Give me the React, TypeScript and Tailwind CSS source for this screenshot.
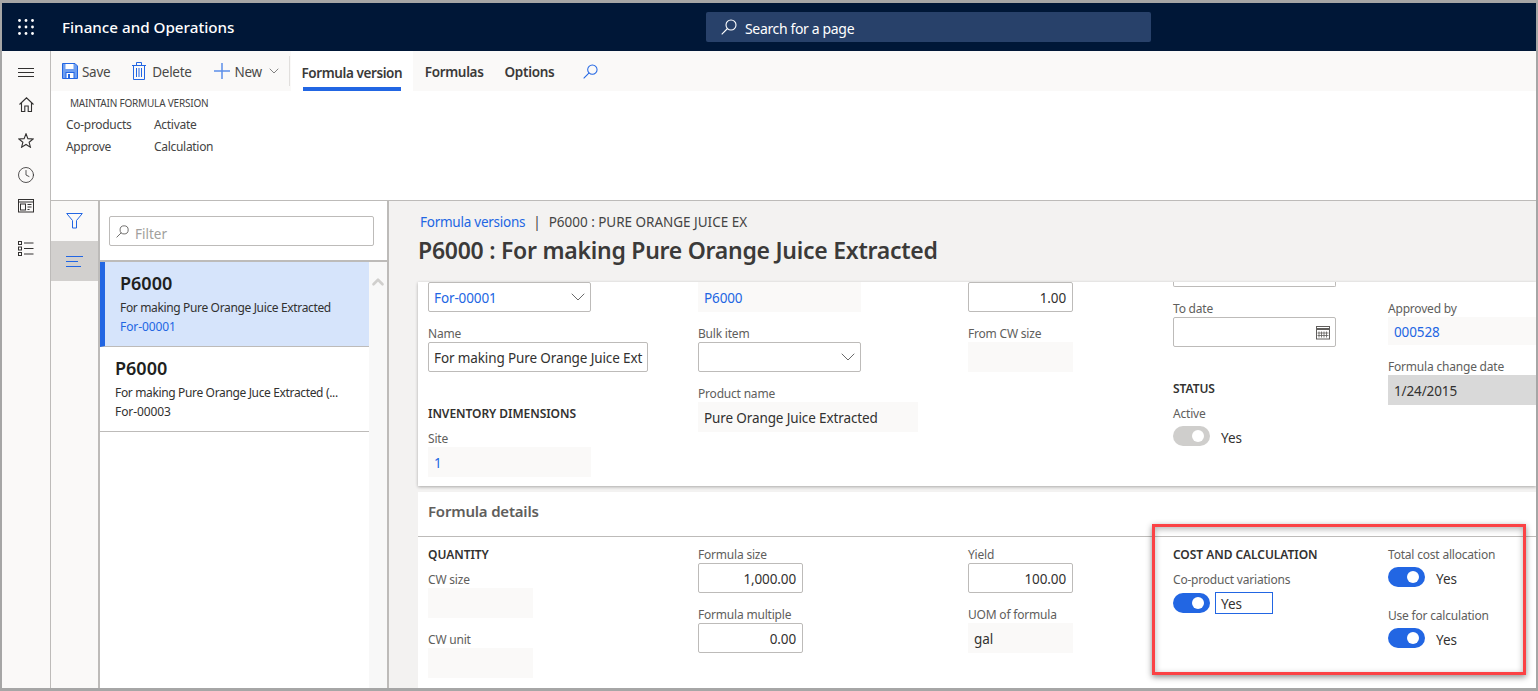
import React from 'react';
import { ChevronDown, ChevronUp, Clock } from 'lucide-react';

const font = { fontFamily: '"Noto Sans", sans-serif' };

function Label({ children }: { children: React.ReactNode }) {
  return <div className="h-[18px] pt-[1px] text-[12px] leading-[18px] text-[#605e5c] tracking-[-0.2px] whitespace-nowrap">{children}</div>;
}

function Heading({ children }: { children: React.ReactNode }) {
  return <div className="h-[19px] text-[12px] leading-[19px] font-semibold text-[#323130] tracking-[-0.05px] whitespace-nowrap">{children}</div>;
}

function Input({ width, right, link, chevron, children }: { width: string; right?: boolean; link?: boolean; chevron?: boolean; children?: React.ReactNode }) {
  return (
    <div className={`${width} h-[30px] border border-[#bdbbb9] rounded-[2px] bg-white flex items-center pl-[5px] text-[13.5px] tracking-[-0.12px] whitespace-nowrap overflow-hidden ${right ? 'justify-end pr-[6px]' : 'justify-between pr-[5px]'} ${link ? 'text-[#2266e3]' : 'text-[#323130]'}`}>
      <span className="pt-[2px]">{children}</span>
      {chevron && <ChevronDown size={24} strokeWidth={0.8} className="text-[#444] -mr-[5px]" />}
    </div>
  );
}

function ReadOnly({ width, link, children, tall }: { width: string; link?: boolean; tall?: string; children?: React.ReactNode }) {
  return (
    <div className={`${width} ${tall ?? 'h-[30px]'} bg-[#faf9f8] flex items-center pl-[6px] pt-[2px] text-[13.5px] tracking-[-0.12px] whitespace-nowrap ${link ? 'text-[#2266e3]' : 'text-[#323130]'}`}>
      {children}
    </div>
  );
}

function Toggle({ grey }: { grey?: boolean }) {
  return (
    <div className={`w-[37px] h-[20px] rounded-full flex items-center justify-end pr-[6px] shrink-0 ${grey ? 'bg-[#cfcecc]' : 'bg-[#2266e3]'}`}>
      <div className="w-[12px] h-[12px] rounded-full bg-white" />
    </div>
  );
}

function ToggleRow({ grey }: { grey?: boolean }) {
  return (
    <div className="h-[20px] flex items-center gap-[11px] text-[13.5px] text-[#323130]">
      <Toggle grey={grey} />
      <span className="pt-[4px]">Yes</span>
    </div>
  );
}

function SearchIcon({ size, color }: { size: number; color: string }) {
  return (
    <svg width={size} height={size} viewBox="0 0 16 16" fill="none" stroke={color} strokeWidth="1.1" className="shrink-0">
      <circle cx="10" cy="6" r="5" />
      <path d="M6.5 9.5L0.7 15.3" />
    </svg>
  );
}

function GridIcon() {
  return (
    <svg width="16" height="16" viewBox="0 0 16 16" fill="#fff">
      {[1.5, 8, 14.5].map((y) => [1.5, 8, 14.5].map((x) => <circle key={`${x}-${y}`} cx={x} cy={y} r="1.4" />))}
    </svg>
  );
}

function SaveIcon() {
  return (
    <svg width="16" height="16" viewBox="0 0 16 16" className="shrink-0">
      <path d="M0.5 0.5H13L15.5 3V15.5H0.5Z" fill="#6f9ff0" stroke="#2266e3" />
      <rect x="3.5" y="1" width="8" height="5" fill="#fff" />
      <rect x="4" y="9.5" width="8" height="6" fill="#fff" stroke="#2266e3" />
      <rect x="6" y="11" width="2" height="4" fill="#2266e3" />
    </svg>
  );
}

function TrashIcon() {
  return (
    <svg width="14" height="18" viewBox="0 0 14 18" fill="none" stroke="#2266e3" className="shrink-0 mr-[2px]">
      <path d="M0 3.5H14M4.5 3.5V0.5H9.5V3.5M1.5 3.5V17.5H12.5V3.5M4.5 6V15M7 6V15M9.5 6V15" />
    </svg>
  );
}

function PlusIcon() {
  return (
    <svg width="16" height="16" viewBox="0 0 16 16" fill="none" stroke="#5c8fe9" strokeWidth="1.5" className="shrink-0 mr-[1px]">
      <path d="M8 0V16M0 8H16" />
    </svg>
  );
}

function MenuIcon() {
  return (
    <svg width="16" height="9" viewBox="0 0 16 9" fill="none" stroke="#323130">
      <path d="M0 0.5H16M0 4.5H16M0 8.5H16" />
    </svg>
  );
}

function HomeIcon() {
  return (
    <svg width="15" height="15" viewBox="0 0 15 15" fill="none" stroke="#323130" strokeWidth="1.1">
      <path d="M0.5 7.5L7.5 0.8L14.5 7.5M2.5 5.8V14.5H5.8V9H9.2V14.5H12.5V5.8" />
    </svg>
  );
}

function StarIcon() {
  return (
    <svg width="16" height="15" viewBox="0 0 16 15" fill="none" stroke="#323130" strokeWidth="1.1">
      <path d="M8 0.8L9.9 5.6L15.2 5.9L11.1 9.2L12.4 14.2L8 11.5L3.6 14.2L4.9 9.2L0.8 5.9L6.1 5.6Z" />
    </svg>
  );
}

function NewsIcon() {
  return (
    <svg width="16" height="14" viewBox="0 0 16 14" fill="none" stroke="#323130">
      <rect x="0.5" y="0.5" width="15" height="12.5" />
      <path d="M0.5 3H15.5" />
      <rect x="2.5" y="5" width="5" height="6" />
      <path d="M9.5 5.5H13.5M9.5 8H13.5M9.5 10.5H11.5" />
    </svg>
  );
}

function ListIcon() {
  return (
    <svg width="16" height="15" viewBox="0 0 16 15" fill="none" stroke="#323130">
      <rect x="0.5" y="0.5" width="3" height="3" />
      <rect x="0.5" y="6" width="3" height="3" />
      <rect x="0.5" y="11.5" width="3" height="3" />
      <path d="M6 2H15.5M6 7.5H15.5M6 13H15.5" />
    </svg>
  );
}

function FunnelIcon() {
  return (
    <svg width="17" height="16" viewBox="0 0 17 16" fill="none" stroke="#2266e3">
      <path d="M0.7 0.5H16.3L10.5 7.5V15H6.5V7.5Z" />
    </svg>
  );
}

function LinesIcon() {
  return (
    <svg width="17" height="11" viewBox="0 0 17 11" fill="none" stroke="#2266e3">
      <path d="M0 0.5H17M0 5.5H12M0 10.5H15" />
    </svg>
  );
}

function CalendarIcon() {
  return (
    <svg width="15" height="15" viewBox="0 0 15 15" fill="none" stroke="#605e5c">
      <rect x="0.5" y="1.5" width="13" height="12.5" />
      <path d="M0.5 4H13.5" strokeWidth="2" />
      <path d="M3 6.5V12.5M5.5 6.5V12.5M8 6.5V12.5M10.5 6.5V12.5M1.5 8H12.5M1.5 10.5H12.5" strokeWidth="0.8" />
    </svg>
  );
}

function Action({ icon, children }: { icon: React.ReactNode; children: React.ReactNode }) {
  return (
    <div className="flex items-center gap-[4px] text-[13.5px] text-[#4a4947] tracking-[-0.3px]">
      {icon}
      <span className="pt-[2px]">{children}</span>
    </div>
  );
}

function Ribbon() {
  return (
    <>
      <div className="h-[40px] bg-[#faf9f8] flex items-center pl-[11px] text-[13.5px]">
        <Action icon={<SaveIcon />}>Save</Action>
        <div className="w-[22px]" />
        <Action icon={<TrashIcon />}>Delete</Action>
        <div className="w-[22px]" />
        <Action icon={<PlusIcon />}>New</Action>
        <ChevronDown size={16} strokeWidth={1} className="ml-[4px] text-[#444]" />
        <div className="ml-[7px] w-px h-[30px] bg-[#e1dfdd]" />
        <div className="ml-px h-full w-[122px] bg-white flex flex-col items-center justify-end font-semibold text-[#3b3a39] tracking-[-0.4px]">
          <span className="mb-[4px]">Formula version</span>
          <div className="w-[98px] h-[4px] bg-[#2266e3]" />
        </div>
        <span className="ml-[12px] pt-[2px] font-semibold text-[#3b3a39] tracking-[-0.35px]">Formulas</span>
        <span className="ml-[21px] pt-[2px] font-semibold text-[#3b3a39] tracking-[-0.3px]">Options</span>
        <div className="ml-[29px]"><SearchIcon size={15} color="#2266e3" /></div>
      </div>
      <div className="h-[110px] bg-white border-b border-[#bdbbb9] pl-[15px] text-[12px] text-[#444] tracking-[-0.3px]">
        <div className="pl-[4px] pt-[5px] h-[25px] text-[10px] leading-[14px] tracking-[-0.2px]">MAINTAIN FORMULA VERSION</div>
        <div className="grid grid-cols-[88px_100px] gap-y-[4px] leading-[18px]">
          <span>Co-products</span>
          <span>Activate</span>
          <span>Approve</span>
          <span>Calculation</span>
        </div>
      </div>
    </>
  );
}

function ListRow({ selected, desc, code }: { selected?: boolean; desc: string; code: string }) {
  return (
    <div className={`h-[85px] border-b border-[#bdbbb9] pl-[15px] ${selected ? 'bg-[#d6e4fb] border-l-[5px] border-l-[#2266e3]' : ''}`}>
      <div className="pt-[7px] h-[37px] text-[18px] leading-[28px] font-semibold text-[#201f1e]">P6000</div>
      <div className="h-[18px] text-[12px] leading-[18px] text-[#323130] tracking-[-0.35px] whitespace-nowrap">{desc}</div>
      <div className={`h-[19px] text-[12px] leading-[19px] tracking-[-0.1px] ${selected ? 'text-[#2266e3]' : 'text-[#323130]'}`}>{code}</div>
    </div>
  );
}

function ListPanel() {
  return (
    <div className="w-[291px] shrink-0 border-x-2 border-[#bdbbb9] bg-white flex flex-col">
      <div className="h-[59px] pt-[15px] pl-[9px]">
        <div className="w-[265px] h-[30px] border border-[#bdbbb9] rounded-[2px] flex items-center pl-[6px] gap-[6px] text-[13.5px] text-[#a19f9d]">
          <SearchIcon size={13} color="#605e5c" />
          <span className="pt-[6px]">Filter</span>
        </div>
      </div>
      <div className="flex-1 flex border-t-2 border-[#bdbbb9] min-h-0">
        <div className="w-[270px]">
          <ListRow selected desc="For making Pure Orange Juice Extracted" code="For-00001" />
          <ListRow desc="For making Pure Orange Juce Extracted (..." code="For-00003" />
        </div>
        <div className="flex-1 bg-[#f8f8f8] flex justify-center pt-[11px]">
          <ChevronUp size={18} strokeWidth={3.5} className="text-[#d0cfcd]" />
        </div>
      </div>
    </div>
  );
}

function GeneralCard() {
  return (
    <div className="h-[204px] shrink-0 bg-white shadow-[0_1px_3px_rgba(0,0,0,0.3)] pl-[10px] flex overflow-hidden">
      <div className="w-[270px] shrink-0">
        <Input width="w-[163px]" link chevron>For-00001</Input>
        <div className="mt-[12px]"><Label>Name</Label></div>
        <Input width="w-[220px]">For making Pure Orange Juice Ext</Input>
        <div className="mt-[32px]"><Heading>INVENTORY DIMENSIONS</Heading></div>
        <div className="mt-[6px]"><Label>Site</Label></div>
        <ReadOnly width="w-[163px]" link>1</ReadOnly>
      </div>
      <div className="w-[270px] shrink-0">
        <ReadOnly width="w-[163px]" link>P6000</ReadOnly>
        <div className="mt-[12px]"><Label>Bulk item</Label></div>
        <Input width="w-[163px]" chevron />
        <div className="mt-[12px]"><Label>Product name</Label></div>
        <ReadOnly width="w-[220px]">Pure Orange Juice Extracted</ReadOnly>
      </div>
      <div className="w-[205px] shrink-0">
        <Input width="w-[105px]" right>1.00</Input>
        <div className="mt-[12px]"><Label>From CW size</Label></div>
        <ReadOnly width="w-[105px]" />
      </div>
      <div className="w-[215px] shrink-0">
        <div className="w-[163px] h-[5px] border border-t-0 border-[#bdbbb9] rounded-b-[2px]" />
        <div className="mt-[12px]"><Label>To date</Label></div>
        <div className="w-[163px] h-[30px] border border-[#bdbbb9] rounded-[2px] flex items-center justify-end pr-[4px]">
          <CalendarIcon />
        </div>
        <div className="mt-[32px]"><Heading>STATUS</Heading></div>
        <div className="mt-[6px]"><Label>Active</Label></div>
        <div className="mt-[4px]"><ToggleRow grey /></div>
      </div>
      <div className="flex-1 pt-[17px]">
        <Label>Approved by</Label>
        <ReadOnly width="w-full" link tall="h-[28px]">000528</ReadOnly>
        <div className="mt-[12px]"><Label>Formula change date</Label></div>
        <div className="h-[30px] bg-[#d9d9d9] flex items-center pl-[6px] pt-[2px] text-[13.5px] text-[#323130] tracking-[-0.12px]">1/24/2015</div>
      </div>
    </div>
  );
}

function DetailsCard() {
  return (
    <div className="mt-[6px] flex-1 bg-white pl-[10px] overflow-hidden">
      <div className="h-[45px] -ml-[10px] pl-[10px] pb-[6px] border-b border-[#bdbbb9] flex items-center text-[15px] font-semibold text-[#605e5c] tracking-[-0.2px]">Formula details</div>
      <div className="flex pt-[8px]">
        <div className="w-[270px] shrink-0">
          <Heading>QUANTITY</Heading>
          <div className="mt-[6px]"><Label>CW size</Label></div>
          <ReadOnly width="w-[105px]" />
          <div className="mt-[12px]"><Label>CW unit</Label></div>
          <ReadOnly width="w-[105px]" />
        </div>
        <div className="w-[270px] shrink-0">
          <Label>Formula size</Label>
          <Input width="w-[105px]" right>1,000.00</Input>
          <div className="mt-[12px]"><Label>Formula multiple</Label></div>
          <Input width="w-[105px]" right>0.00</Input>
        </div>
        <div className="w-[205px] shrink-0">
          <Label>Yield</Label>
          <Input width="w-[105px]" right>100.00</Input>
          <div className="mt-[12px]"><Label>UOM of formula</Label></div>
          <ReadOnly width="w-[105px]">gal</ReadOnly>
        </div>
        <div className="w-[215px] shrink-0">
          <Heading>COST AND CALCULATION</Heading>
          <div className="mt-[6px]"><Label>Co-product variations</Label></div>
          <div className="mt-[4px] flex items-center gap-[5px]">
            <Toggle />
            <div className="w-[58px] h-[22px] border border-[#2266e3] flex items-center pl-[5px] pt-[2px] text-[13.5px] text-[#323130]">Yes</div>
          </div>
        </div>
        <div className="flex-1">
          <Label>Total cost allocation</Label>
          <div className="mt-[4px]"><ToggleRow /></div>
          <div className="mt-[19px]"><Label>Use for calculation</Label></div>
          <div className="mt-[4px]"><ToggleRow /></div>
        </div>
      </div>
    </div>
  );
}

export default function App() {
  return (
    <div style={font} className="relative w-[1538px] h-[691px] border-t-[3px] border-b-[3px] border-x-2 border-[#a6a6a6] flex flex-col overflow-hidden bg-white">
      {/* Top bar */}
      <header className="h-[48px] shrink-0 bg-[#001737] flex items-center relative text-white">
        <div className="w-[48px] flex justify-center"><GridIcon /></div>
        <div className="ml-[12px] text-[15.2px] font-medium">Finance and Operations</div>
        <div className="absolute left-[704px] top-[9px] w-[445px] h-[30px] rounded-[2px] bg-[#28416a] flex items-center pl-[15px] gap-[8px] text-[14px] tracking-[-0.35px]">
          <SearchIcon size={16} color="#ffffff" />
          <span className="pt-[2px]">Search for a page</span>
        </div>
      </header>

      <div className="flex-1 flex min-h-0">
        {/* Nav rail */}
        <nav className="w-[49px] shrink-0 bg-[#faf9f8] border-r border-[#bdbbb9] flex flex-col items-center text-[#323130]">
          <div className="mt-[17px] h-[9px]"><MenuIcon /></div>
          <div className="mt-[20px] h-[15px]"><HomeIcon /></div>
          <div className="mt-[21px] h-[15px]"><StarIcon /></div>
          <Clock size={18} strokeWidth={1.1} className="mt-[18px]" />
          <div className="mt-[15px] h-[14px]"><NewsIcon /></div>
          <div className="mt-[28px]"><ListIcon /></div>
        </nav>

        <div className="flex-1 flex flex-col min-w-0">
          <Ribbon />
          <div className="flex-1 flex min-h-0">
            {/* Filter column */}
            <div className="w-[47px] shrink-0 bg-[#faf9f8] flex flex-col">
              <div className="h-[40px] flex items-center justify-center"><FunnelIcon /></div>
              <div className="h-[40px] bg-[#d2d0ce] flex items-center justify-center"><LinesIcon /></div>
            </div>
            <ListPanel />
            {/* Form */}
            <main className="flex-1 min-w-0 bg-[#f3f2f1] flex flex-col">
              <div className="h-[81px] shrink-0 pl-[29px]">
                <div className="pt-[11px] h-[34px] pl-[2px] text-[13.5px] leading-[20px] text-[#444] tracking-[-0.02px]">
                  <span className="text-[#2266e3] tracking-[-0.25px]">Formula versions</span>
                  <span className="mx-[8px]">|</span>
                  P6000 : PURE ORANGE JUICE EX
                </div>
                <div className="text-[23px] leading-[30px] font-semibold text-[#3b3a39] tracking-[-0.26px] whitespace-nowrap">P6000 : For making Pure Orange Juice Extracted</div>
              </div>
              <div className="flex-1 min-h-0 ml-[29px] flex flex-col">
                <GeneralCard />
                <DetailsCard />
              </div>
            </main>
          </div>
        </div>
      </div>

      {/* Callout */}
      <div className="absolute left-[1150px] top-[521px] w-[374px] h-[151px] border-[3px] border-[#fb4245] shadow-[0_2px_6px_rgba(0,0,0,0.45),inset_0_2px_6px_rgba(0,0,0,0.3)]" />
    </div>
  );
}
